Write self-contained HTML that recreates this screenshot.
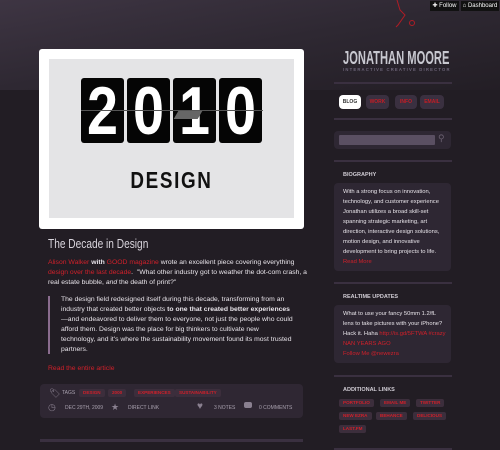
<!DOCTYPE html><html><head><style>
body{margin:0;width:500px;height:450px;overflow:hidden;background:#221d24;font-family:"Liberation Sans",sans-serif;position:relative}
.a{position:absolute}
.top{left:0;top:0;width:500px;height:90px;background:linear-gradient(170deg,#3e3543 0%,#2e2832 50%,#231e25 100%)}
.cond{font-family:"Liberation Sans",sans-serif;transform-origin:left top;white-space:nowrap}
p{margin:0}
.t{font-size:6.8px;color:#e8e4ea;line-height:10px}
.r{color:#d0202a}
.hl{background:#3a3040;height:2px}
.btn{font-size:5px;font-weight:bold;color:#c41d25;background:#3a3040;border-radius:4px;text-align:center;line-height:14px;height:14px}
.tag{font-size:4.6px;font-weight:bold;color:#d0202a;background:#3c2e3c;border-radius:2px;text-align:center;line-height:8px;height:8px;padding:0 4px;white-space:nowrap}
.box{background:#2e2733;border-radius:4px}
.h{font-size:5.5px;font-weight:bold;color:#d0ccd4}
.dig{background:#050505;border-radius:3px;width:43px;height:65px;top:78px;overflow:hidden}
.dig span{position:absolute;left:0;top:-2px;width:43px;color:#fff;font-size:68px;font-weight:bold;text-align:center;line-height:70px;transform:scaleX(.82);transform-origin:center}
</style></head><body>
<div class="a top"></div>
<svg class="a" style="left:0;top:0" width="500" height="90"><path d="M397 0 L400 10 L405 15 L398 25 L396 27" stroke="#b01c25" fill="none"/><circle cx="412" cy="23" r="2.5" stroke="#b01c25" fill="none"/></svg>
<div class="a" style="left:430px;top:1px;width:29px;height:10px;background:#111;color:#fff;font-size:6px;line-height:10px;text-align:center">✚ Follow</div>
<div class="a" style="left:461px;top:1px;width:38px;height:10px;background:#111;color:#fff;font-size:6px;line-height:10px;text-align:center">⌂ Dashboard</div>

<div class="a" style="left:39px;top:49px;width:265px;height:180px;background:#fff;border-radius:3px"></div>
<div class="a" style="left:49px;top:59px;width:245px;height:159px;background:#e4e4e6"></div>
<div class="a dig" style="left:81px"><span>2</span></div>
<div class="a dig" style="left:127px"><span>0</span></div>
<div class="a dig" style="left:173px"><span>1</span></div>
<div class="a dig" style="left:219px"><span>0</span></div>
<div class="a" style="left:81px;top:110px;width:182px;height:1px;background:#555"></div>
<div class="a" style="left:176px;top:111px;width:24px;height:8px;background:#666;transform:skewX(-30deg)"></div>
<div class="a" style="left:49px;top:167px;width:245px;text-align:center;font-size:23px;font-weight:bold;color:#111;letter-spacing:2px;transform:scaleX(.82);transform-origin:center top">DESIGN</div>

<div class="a cond" style="left:48px;top:236px;font-size:13px;color:#d8d4dc;transform:scaleX(.78)">The Decade in Design</div>
<div class="a t" style="left:48px;top:258px;width:262px"><span class="r">Alison Walker</span> <b>with</b> <span class="r">GOOD magazine</span> wrote an excellent piece covering everything <span class="r">design over the last decade</span>. &nbsp;"What other industry got to weather the dot-com crash, a real estate bubble, <i>and</i> the death of print?"</div>
<div class="a" style="left:48px;top:296px;width:2px;height:58px;background:#8a6c8e"></div>
<div class="a t" style="left:61px;top:295px;width:232px">The design field redesigned itself during this decade, transforming from an industry that created better objects <b>to one that created better experiences</b>—and endeavored to deliver them to everyone, not just the people who could afford them. Design was the place for big thinkers to cultivate new technology, and it's where the sustainability movement found its most trusted partners.</div>
<div class="a t r" style="left:48px;top:364px">Read the entire article</div>
<div class="a box" style="left:40px;top:384px;width:263px;height:34px;background:#2f2733"></div>
<div class="a" style="left:49px;top:388px;color:#8a8090;font-size:9px">🏷</div>
<div class="a" style="left:62px;top:390px;font-size:5px;color:#a8a0ae">TAGS</div>
<div class="a tag" style="left:79px;top:389px">DESIGN</div>
<div class="a tag" style="left:108px;top:389px">2000</div>
<div class="a tag" style="left:134px;top:389px">EXPERIENCES</div>
<div class="a tag" style="left:175px;top:389px">SUSTAINABILITY</div>
<div class="a" style="left:48px;top:402px;color:#8a8090;font-size:9px">◷</div>
<div class="a" style="left:65px;top:405px;font-size:5px;color:#a8a0ae">DEC 29TH, 2009</div>
<div class="a" style="left:111px;top:402px;color:#8a8090;font-size:9px">★</div>
<div class="a" style="left:128px;top:405px;font-size:5px;color:#a8a0ae">DIRECT LINK</div>
<div class="a" style="left:197px;top:401px;color:#8a8090;font-size:10px">♥</div>
<div class="a" style="left:214px;top:405px;font-size:5px;color:#a8a0ae">3 NOTES</div>
<div class="a" style="left:244px;top:402px;width:8px;height:6px;background:#8a8090;border-radius:2px"></div>
<div class="a" style="left:259px;top:405px;font-size:5px;color:#a8a0ae">0 COMMENTS</div>
<div class="a hl" style="left:40px;top:439px;width:263px;height:3px"></div>

<div class="a cond" style="left:343px;top:48px;font-size:18px;font-weight:bold;color:#c8c8d0;transform:scaleX(.62)">JONATHAN MOORE</div>
<div class="a" style="left:343px;top:67px;font-size:4.2px;letter-spacing:1.2px;color:#6c6478;font-weight:bold;white-space:nowrap">INTERACTIVE CREATIVE DIRECTOR</div>
<div class="a hl" style="left:334px;top:82px;width:118px"></div>
<div class="a btn" style="left:339px;top:95px;width:22px;background:#fff;color:#333">BLOG</div>
<div class="a btn" style="left:366px;top:95px;width:23px">WORK</div>
<div class="a btn" style="left:395px;top:95px;width:22px">INFO</div>
<div class="a btn" style="left:420px;top:95px;width:24px">EMAIL</div>
<div class="a hl" style="left:334px;top:118px;width:118px"></div>
<div class="a box" style="left:334px;top:131px;width:117px;height:18px"></div>
<div class="a" style="left:339px;top:135px;width:96px;height:10px;background:#5a4f62;border-radius:1px"></div>
<div class="a" style="left:438px;top:133px;color:#6a6070;font-size:9px">⚲</div>
<div class="a hl" style="left:334px;top:160px;width:118px"></div>
<div class="a h" style="left:343px;top:172px">BIOGRAPHY</div>
<div class="a box" style="left:334px;top:183px;width:117px;height:88px"></div>
<div class="a t" style="left:343px;top:187px;width:105px;font-size:5.8px">With a strong focus on innovation, technology, and customer experience Jonathan utilizes a broad skill-set spanning strategic marketing, art direction, interactive design solutions, motion design, and innovative development to bring projects to life.<br><span class="r">Read More</span></div>
<div class="a hl" style="left:334px;top:282px;width:118px"></div>
<div class="a h" style="left:343px;top:294px">REALTIME UPDATES</div>
<div class="a box" style="left:334px;top:305px;width:117px;height:58px"></div>
<div class="a t" style="left:343px;top:309px;width:105px;font-size:5.8px">What to use your fancy 50mm 1.2/fL lens to take pictures with your iPhone? Hack it. Haha <span class="r">http://is.gd/5FTWA #crazy<br>NAN YEARS AGO<br>Follow Me @newezra</span></div>
<div class="a hl" style="left:334px;top:375px;width:118px"></div>
<div class="a h" style="left:343px;top:387px">ADDITIONAL LINKS</div>
<div class="a tag" style="left:339px;top:399px">PORTFOLIO</div>
<div class="a tag" style="left:380px;top:399px">EMAIL ME</div>
<div class="a tag" style="left:416px;top:399px">TWITTER</div>
<div class="a tag" style="left:339px;top:412px">NEW EZRA</div>
<div class="a tag" style="left:376px;top:412px">BEHANCE</div>
<div class="a tag" style="left:413px;top:412px">DELICIOUS</div>
<div class="a tag" style="left:339px;top:425px">LAST.FM</div>
<div class="a hl" style="left:334px;top:448px;width:118px"></div>
</body></html>
